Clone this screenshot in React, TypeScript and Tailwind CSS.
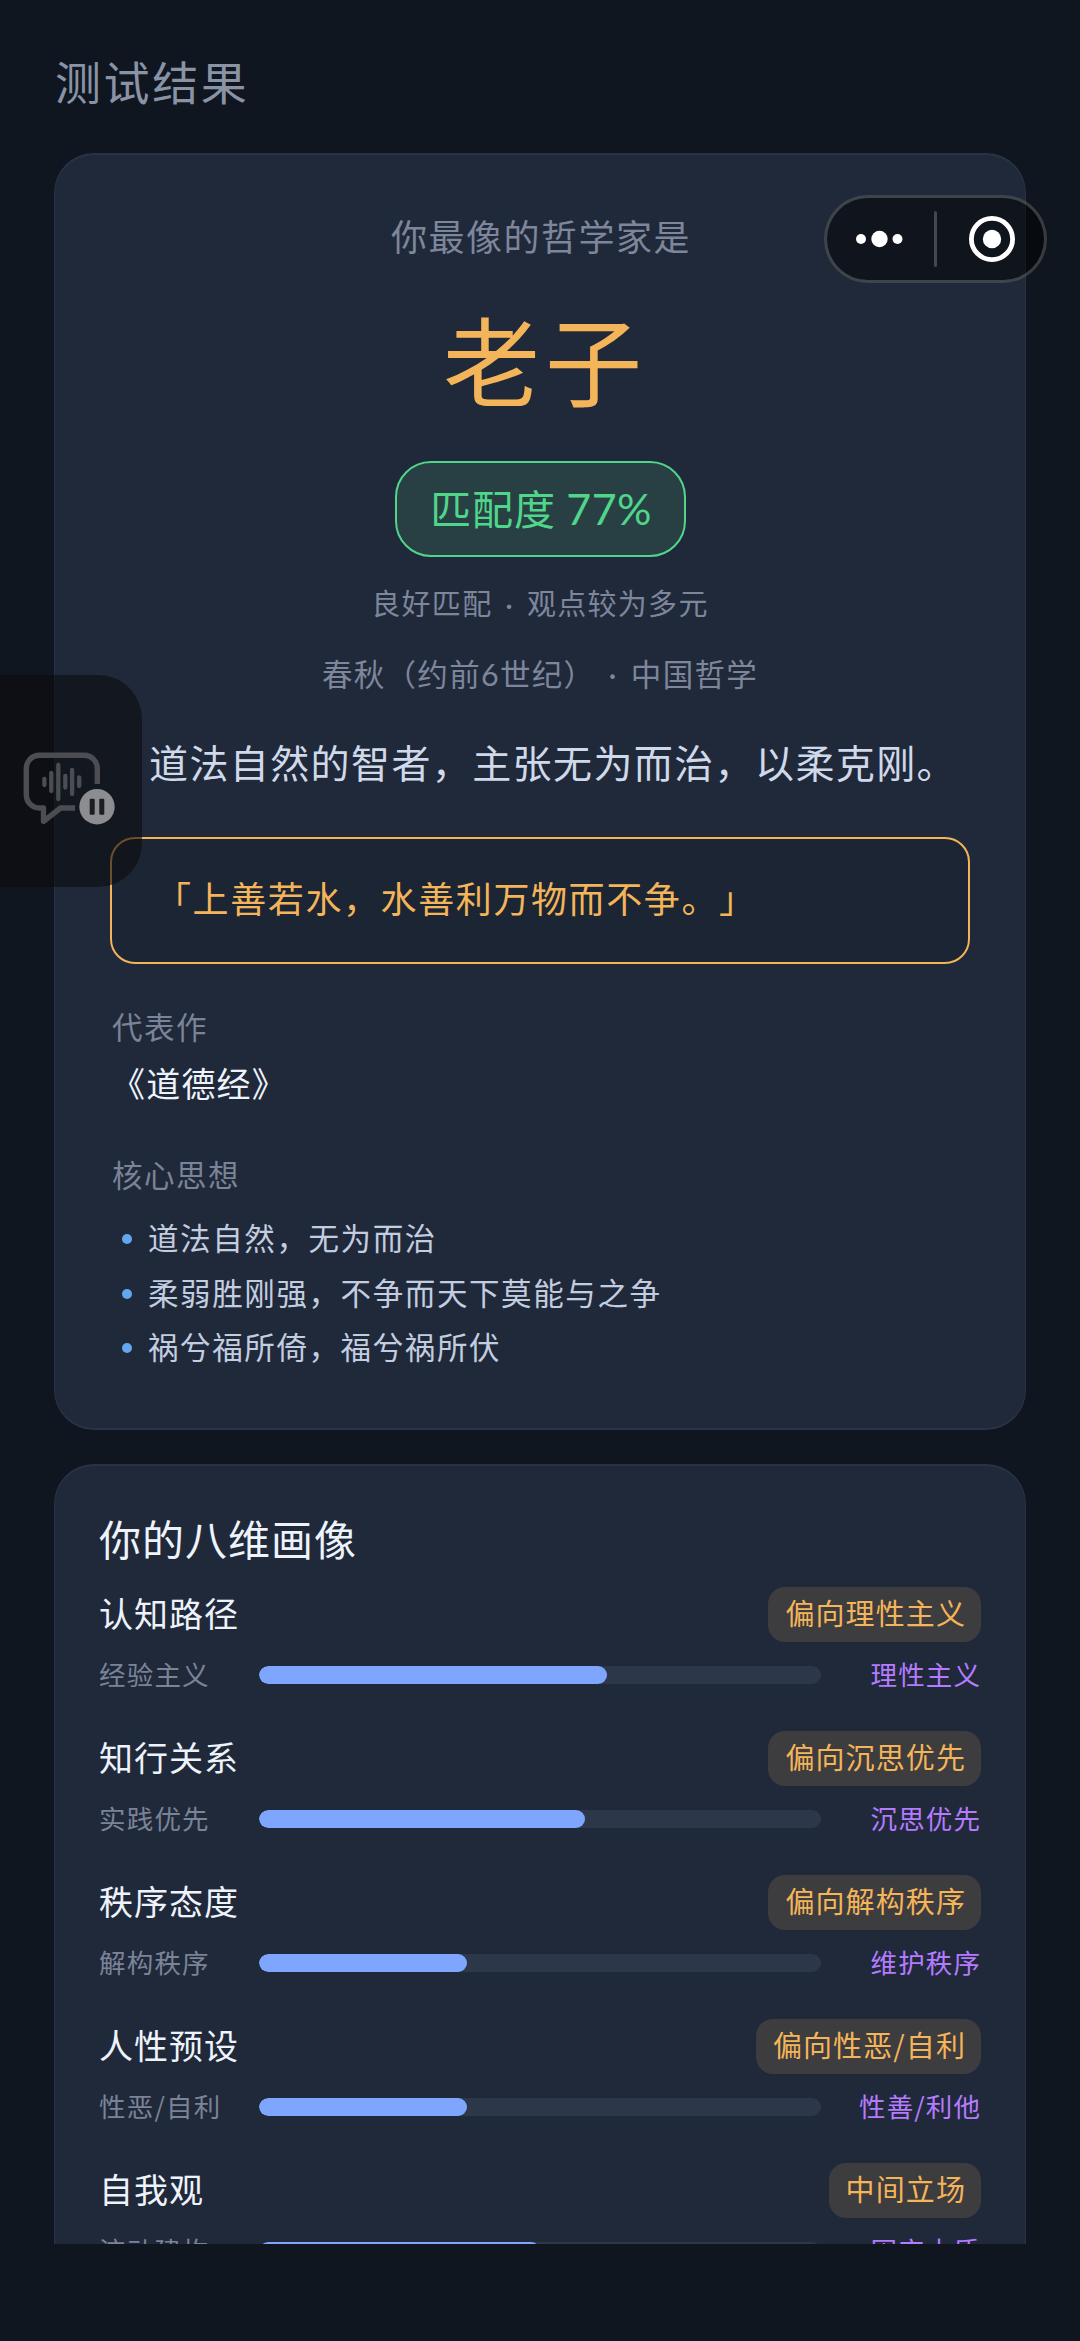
import React from "react";

type Dimension = {
  name: string;
  tag: string;
  left: string;
  right: string;
  value: number;
};

const ideas = [
  "道法自然，无为而治",
  "柔弱胜刚强，不争而天下莫能与之争",
  "祸兮福所倚，福兮祸所伏",
];

const dimensions: Dimension[] = [
  { name: "认知路径", tag: "偏向理性主义", left: "经验主义", right: "理性主义", value: 62 },
  { name: "知行关系", tag: "偏向沉思优先", left: "实践优先", right: "沉思优先", value: 58 },
  { name: "秩序态度", tag: "偏向解构秩序", left: "解构秩序", right: "维护秩序", value: 37 },
  { name: "人性预设", tag: "偏向性恶/自利", left: "性恶/自利", right: "性善/利他", value: 37 },
  { name: "自我观", tag: "中间立场", left: "流动建构", right: "固定本质", value: 50 },
];

function Dot() {
  return <span className="px-[5px] font-['Lato','Inter',sans-serif] leading-none">·</span>;
}

function DimensionRow({ item }: { item: Dimension }) {
  return (
    <div className="h-36">
      <div className="flex h-[55px] items-center justify-between">
        <span className="-mt-1 text-[34px] leading-[50px] tracking-[1px] text-[#eef3fb]">{item.name}</span>
        <span className="flex h-[55px] items-center rounded-[17px] bg-[#3d3c3f] pb-[3px] pl-[17px] pr-[15px] text-[29px] tracking-[1.1px] text-[#f4b459]">
          {item.tag}
        </span>
      </div>
      <div className="mt-[15px] flex h-9 items-center">
        <span className="w-40 pb-[3px] text-[26.5px] leading-9 tracking-[1.2px] text-[#7a8397]">{item.left}</span>
        <div className="h-[18.5px] w-[562px] overflow-hidden rounded-full bg-[#2d374a]">
          <div className="h-full rounded-full bg-[#7ea6ff]" style={{ width: `${item.value}%` }} />
        </div>
        <span className="flex-1 pb-[3px] text-right text-[26.5px] leading-9 tracking-[1.1px] text-[#b57bff]">{item.right}</span>
      </div>
    </div>
  );
}

function Capsule() {
  return (
    <div className="absolute left-[824px] top-[195px] h-[88px] w-[223px] rounded-full border-[3px] border-white/20 bg-black/50">
      <svg className="absolute -left-[3px] -top-[3px]" width="223" height="88" viewBox="0 0 223 88">
        <circle cx="37" cy="44" r="5" fill="#fff" />
        <circle cx="55.5" cy="44" r="8.2" fill="#fff" />
        <circle cx="73.5" cy="44" r="5" fill="#fff" />
        <rect x="110" y="16" width="3" height="56" rx="1.5" fill="#fff" fillOpacity="0.22" />
        <circle cx="168" cy="44" r="20.6" fill="none" stroke="#fff" strokeWidth="4.8" />
        <circle cx="168" cy="44" r="9.2" fill="#fff" />
      </svg>
    </div>
  );
}

function VoiceWidget() {
  return (
    <div className="absolute left-0 top-[675px] h-[212px] w-[142px] rounded-r-[44px] bg-[#0c0c0e]/60">
      <svg width="142" height="212" viewBox="0 0 142 212" fill="none">
        <g stroke="#4b4d53" strokeLinejoin="round">
          <path
            d="M97.3 109V93.3a13 13 0 0 0-13-13H39.3a13 13 0 0 0-13 13V120a13 13 0 0 0 13 13H43.5V146.3L60.5 133H75"
            strokeWidth="5.4"
          />
          <path
            d="M44.4 104V110M51.3 98V116M58.3 90V124M65.3 101V112.5M72.1 95V119M79.2 102.5V111"
            strokeWidth="4.3"
            strokeLinecap="round"
          />
        </g>
        <circle cx="97" cy="131.7" r="17.7" fill="#8b8d90" />
        <rect x="89.7" y="123.7" width="5" height="16" rx="1" fill="#1b1d22" />
        <rect x="99.3" y="123.7" width="5" height="16" rx="1" fill="#1b1d22" />
      </svg>
    </div>
  );
}

export default function App() {
  return (
    <div
      className="relative h-[2341px] w-[1080px] overflow-hidden bg-[#0f1620] font-['Noto_Sans_CJK_SC',sans-serif] [text-spacing-trim:space-all]"
      lang="zh-CN"
    >
      <div className="h-[2244px] overflow-hidden px-[54px]">
        <h1 className="pl-px pt-[50px] text-[46px] leading-[60px] tracking-[2.6px] text-[#8a93a6]">测试结果</h1>

        <section className="mt-[43px] h-[1277px] rounded-[40px] border-x border-y-2 border-[#2a3345] bg-[#20293a] px-[55px]">
          <div className="flex flex-col items-center">
            <p className="mt-[55px] pl-0.5 text-[36px] leading-[50px] tracking-[1.5px] text-[#7d869b]">你最像的哲学家是</p>
            <p className="mt-[37px] pl-2.5 text-[97px] leading-[120px] tracking-[5px] text-[#f4b459]">老子</p>
            <div className="mt-[44px] flex h-24 w-[291px] items-center justify-center rounded-[36px] border-2 border-[#4fd68b] bg-[#284044] pb-0.5 text-[41px] tracking-[1px] text-[#4fd68b]">
              <span className="pl-0.5">
                匹配度 <span className="font-['Lato',sans-serif] text-[43px] leading-none tracking-[0.4px]">77%</span>
              </span>
            </div>
            <p className="mt-[25px] h-10 text-[29px] leading-10 tracking-[1.3px] text-[#7d869b]">
              良好匹配 <Dot /> 观点较为多元
            </p>
            <p className="mt-[31px] h-10 text-[30.5px] leading-10 tracking-[1.3px] text-[#7d869b]">
              春秋（约前<span className="font-['Lato',sans-serif] leading-none">6</span>世纪） <Dot /> 中国哲学
            </p>
            <p className="mt-[43px] whitespace-nowrap pl-[26px] text-[39px] leading-[50px] tracking-[1.4px] text-[#d0d9ea]">
              道法自然的智者，主张无为而治，以柔克刚。
            </p>
          </div>

          <div className="mt-[51px] flex h-[127px] items-center rounded-[25px] border-2 border-[#f4b459] bg-[#1c2533] pb-2 pl-[43px] text-[36px] tracking-[1.6px] text-[#f4b459]">
            「上善若水，水善利万物而不争。」
          </div>

          <h2 className="mt-[42px] pl-0.5 text-[30.5px] leading-10 tracking-[1.5px] text-[#7a8397]">代表作</h2>
          <p className="mt-[14px] pl-px text-[34px] leading-[45px] tracking-[1.2px] text-[#eef3fb]">《道德经》</p>

          <h2 className="mt-[49px] pl-0.5 text-[30.5px] leading-10 tracking-[1.5px] text-[#7a8397]">核心思想</h2>
          <ul className="mt-4 pl-3">
            {ideas.map((idea) => (
              <li key={idea} className="flex h-[54.5px] items-center text-[30.5px] tracking-[1.6px] text-[#c3cde0]">
                <span className="mr-4 mt-1 size-2.5 rounded-full bg-[#63a8ee]" />
                <span className="pt-0.5">{idea}</span>
              </li>
            ))}
          </ul>
        </section>

        <section className="mt-[34px] h-[1300px] rounded-[40px] border-x border-y-2 border-[#2a3345] bg-[#20293a] px-11">
          <h2 className="pt-[42px] text-[42px] leading-[60px] tracking-[1px] text-[#eef3fb]">你的八维画像</h2>
          <div className="mt-[19px]">
            {dimensions.map((item) => (
              <DimensionRow key={item.name} item={item} />
            ))}
          </div>
        </section>
      </div>

      <Capsule />
      <VoiceWidget />
    </div>
  );
}
